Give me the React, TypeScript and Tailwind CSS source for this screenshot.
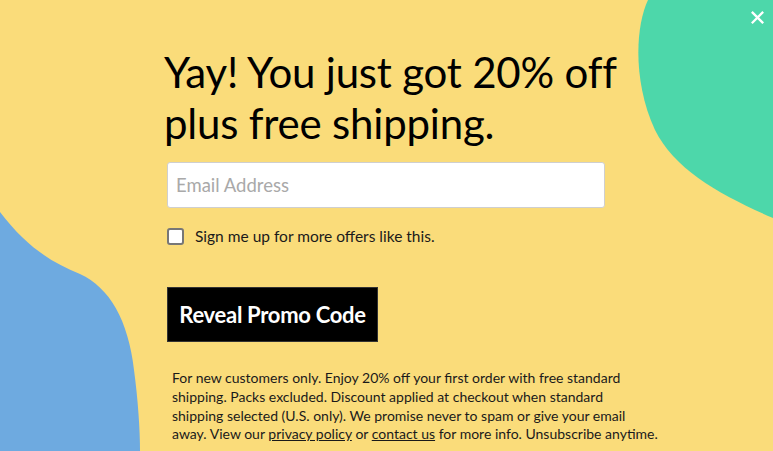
import React from 'react';

const font = { fontFamily: 'Lato, "Open Sans", sans-serif' };

const Blobs = () => (
  <svg className="absolute inset-0 h-full w-full" viewBox="0 0 773 451" preserveAspectRatio="none" aria-hidden="true">
    <path d="M648,0 C636,25 632,80 655,130 C675,170 720,195 773,218 L773,0 Z" fill="#4dd7aa" />
    <path d="M0,212 C25,245 50,262 80,274 C110,288 128,320 134,370 C138,400 140,430 140,451 L0,451 Z" fill="#6eaae0" />
  </svg>
);

const App = () => {
  return (
    <div className="relative h-[451px] w-[773px] overflow-hidden bg-[#fadc7a]" style={font}>
      <Blobs />

      <button className="absolute right-[7px] top-[8px] flex h-[18px] w-[18px] items-center justify-center text-white" aria-label="Close">
        <svg viewBox="0 0 16 16" className="h-[13px] w-[13px]">
          <path d="M2 2 L14 14 M14 2 L2 14" stroke="currentColor" strokeWidth="2.8" strokeLinecap="square" />
        </svg>
      </button>

      <div className="relative flex flex-col pl-[167px] pt-[47px]">
        <h1 className="-ml-[3px] text-[42px] leading-[51px] tracking-[-0.2px] text-black">
          Yay! You just got 20% off
          <br />
          plus free shipping.
        </h1>

        <input
          type="email"
          placeholder="Email Address"
          className="mt-[13px] h-[46px] w-[438px] rounded-[3px] border border-[#cfcfcf] bg-white px-[8px] text-[18.5px] text-[#333] placeholder:text-[#a9a9a9] outline-none"
        />

        <label className="mt-[17px] flex items-center gap-[11px] text-[15.5px] text-[#1a1a1a]">
          <span className="h-[17px] w-[17px] rounded-[3px] border-2 border-[#777] bg-white" />
          Sign me up for more offers like this.
        </label>

        <button className="mt-[39px] h-[55px] w-[211px] border border-[#333] bg-black text-[22px] font-bold tracking-[-0.3px] text-white">
          Reveal Promo Code
        </button>

        <p className="ml-[5px] mt-[27px] text-[14px] leading-[18.7px] text-[#1a1a1a]">
          For new customers only. Enjoy 20% off your first order with free standard
          <br />
          shipping. Packs excluded. Discount applied at checkout when standard
          <br />
          shipping selected (U.S. only). We promise never to spam or give your email
          <br />
          away. View our <a className="underline" href="#">privacy policy</a> or{' '}
          <a className="underline" href="#">contact us</a> for more info. Unsubscribe anytime.
        </p>
      </div>
    </div>
  );
};

export default App;
